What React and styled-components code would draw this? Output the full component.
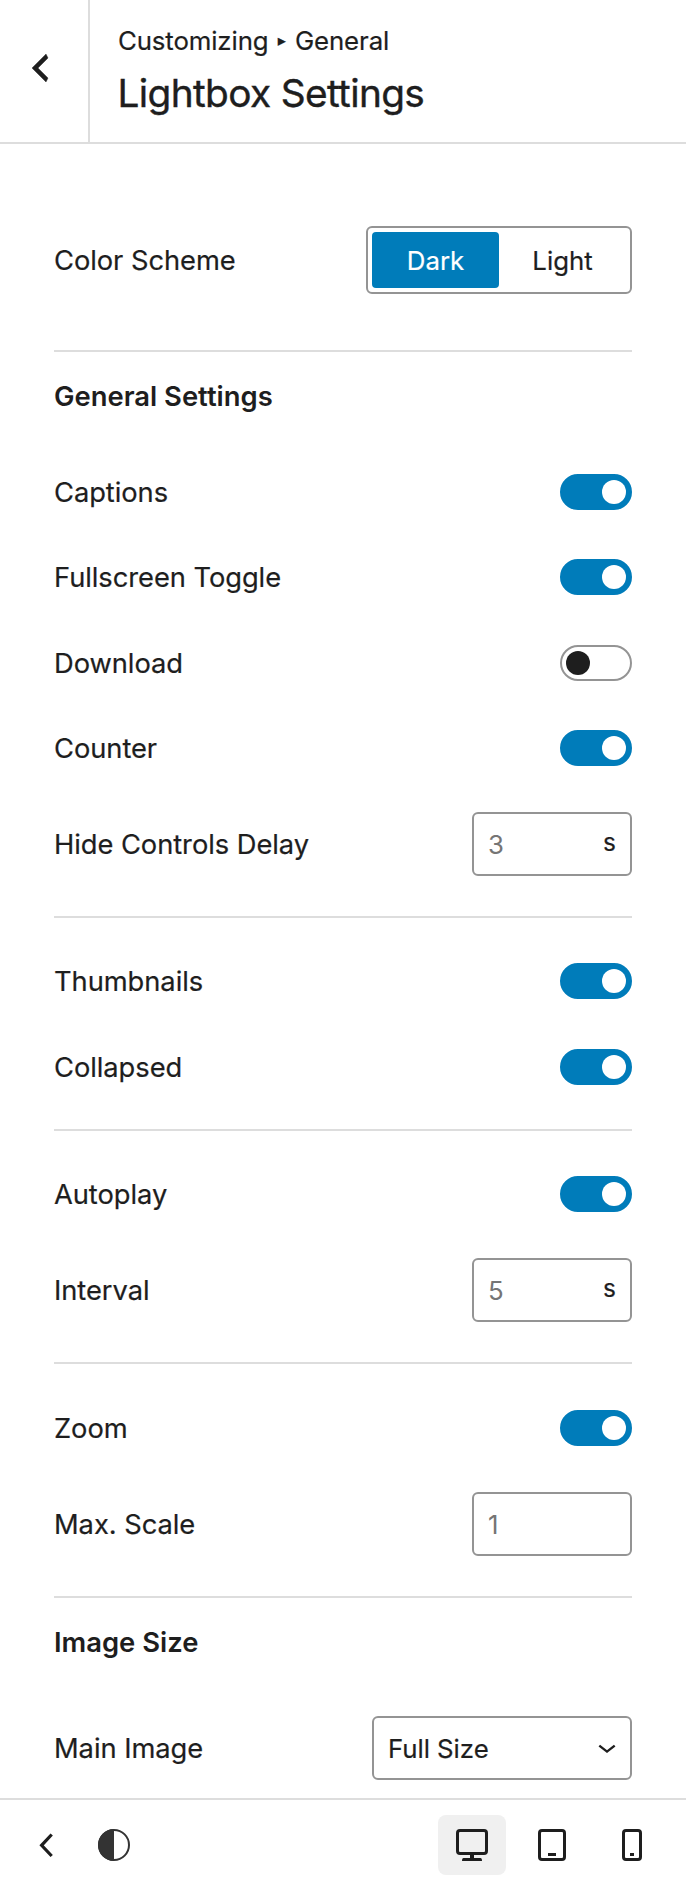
import React, { useState } from 'react';
import styled, { createGlobalStyle, css } from 'styled-components';

const GlobalStyle = createGlobalStyle`
  * { box-sizing: border-box; }
  body { margin: 0; background: #fff; }
  button, input { font-family: inherit; color: inherit; }
`;

const color = {
  text: '#1e1e1e',
  muted: '#757575',
  line: '#dddddd',
  border: '#949494',
  accent: '#007cba',
};

const Panel = styled.div`
  display: flex;
  flex-direction: column;
  width: 686px;
  height: 1880px;
  background: #fff;
  color: ${color.text};
  font-family: Inter, 'Liberation Sans', sans-serif;
  font-size: 25.8px;
  -webkit-text-stroke: 0.2px currentColor;
`;

const Header = styled.header`
  display: flex;
  flex: none;
  height: 144px;
  border-bottom: 2px solid ${color.line};
`;

const BackButton = styled.button`
  display: flex;
  align-items: center;
  width: 90px;
  padding: 0 0 7px 20px;
  border: 0;
  border-right: 2px solid ${color.line};
  background: none;
`;

const HeaderText = styled.div`
  padding: 22px 0 0 28px;
`;

const Breadcrumb = styled.div`
  display: flex;
  align-items: center;
  height: 36px;
  letter-spacing: -0.12px;
`;

const Separator = styled.span`
  width: 26.5px;
  padding-top: 1px;
  text-align: center;
  font: 16px/36px 'DejaVu Sans', sans-serif;
`;

const Title = styled.h1`
  margin: 7px 0 0 -0.5px;
  font-size: 38.8px;
  font-weight: 400;
  line-height: 56px;
  letter-spacing: -0.64px;
  -webkit-text-stroke: 0.4px ${color.text};
`;

const Body = styled.main`
  flex: 1;
  min-height: 0;
  padding: 0 54px;
  overflow: hidden;
`;

const Section = styled.section`
  padding: ${(p) => p.$top ?? 0}px 0 ${(p) => p.$bottom ?? 0}px;
  border-bottom: 2px solid ${color.line};
`;

const SectionTitle = styled.h2`
  height: 97px;
  margin: 0;
  font-size: 27.4px;
  font-weight: 600;
  line-height: 88px;
  -webkit-text-stroke: 0;
`;

const rowHeights = { toggle: 85.5, field: 106, segment: 68 };

const Label = styled.span`
  padding-top: 2px;
  font-size: 27.3px;
  line-height: 36px;
  letter-spacing: -0.05px;
`;

const Row = styled.div`
  display: flex;
  align-items: center;
  justify-content: space-between;
  height: ${(p) => rowHeights[p.$kind]}px;
  ${(p) => p.$kind === 'segment' && css`
    ${Label} { padding-top: 1px; }
  `}
`;

const Segmented = styled.div`
  display: flex;
  padding: 4px;
  border: 2px solid ${color.border};
  border-radius: 6px;
`;

const Segment = styled.button`
  width: 127px;
  height: 56px;
  padding: 1px 0 0;
  border: 0;
  border-radius: 4px;
  font-size: 25.8px;
  background: ${(p) => (p.$active ? color.accent : 'transparent')};
  color: ${(p) => (p.$active ? '#fff' : color.text)};
  -webkit-text-stroke: 0.2px currentColor;
`;

const Switch = styled.button`
  display: flex;
  align-items: center;
  justify-content: flex-start;
  width: 72px;
  height: 36px;
  padding: 0 4px;
  border: 2px solid ${color.border};
  border-radius: 18px;
  background: #fff;
  ${(p) =>
    p.$on &&
    css`
      justify-content: flex-end;
      border-color: ${color.accent};
      background: ${color.accent};
    `}
`;

const Knob = styled.span`
  width: 24px;
  height: 24px;
  border-radius: 50%;
  background: ${(p) => (p.$on ? '#fff' : color.text)};
`;

const Field = styled.div`
  display: flex;
  align-items: center;
  justify-content: space-between;
  width: ${(p) => p.$width}px;
  height: 64px;
  padding: 0 14px;
  border: 2px solid ${color.border};
  border-radius: 6px;
`;

const NumberInput = styled.input`
  flex: 1;
  min-width: 0;
  height: 36px;
  padding: 1px 0 0;
  border: 0;
  outline: 0;
  background: none;
  font-size: 25.8px;
  -webkit-text-stroke: 0;
  &::placeholder { color: ${color.muted}; opacity: 1; }
`;

const Unit = styled.span`
  padding-bottom: 4px;
  font-size: 24.5px;
  line-height: 30px;
`;

const SelectValue = styled.span`
  padding-top: 1px;
  letter-spacing: -0.05px;
`;

const Footer = styled.footer`
  display: flex;
  flex: none;
  align-items: center;
  justify-content: space-between;
  height: 82px;
  padding: 15px 20px 5px 36px;
  border-top: 2px solid ${color.line};
`;

const Tools = styled.div`
  display: flex;
  align-items: center;
  gap: ${(p) => p.$gap}px;
`;

const ToolButton = styled.button`
  display: flex;
  padding: 0;
  border: 0;
  background: none;
`;

const DeviceButton = styled(ToolButton)`
  align-items: center;
  justify-content: center;
  width: 68px;
  height: 60px;
  border-radius: 8px;
  background: ${(p) => (p.$active ? '#f0f0f0' : 'transparent')};
`;

const ArrowLeft = () => (
  <svg width="40" height="40" viewBox="0 0 20 20" fill={color.text} stroke={color.text} strokeWidth="0.2">
    <path d="M14 5l-5 5 5 5-1 2-7-7 7-7z" />
  </svg>
);

const ChevronLeft = () => (
  <svg width="20" height="32" viewBox="0 0 20 32" fill="none" stroke={color.text} strokeWidth="3.2">
    <path d="M15.7 5.5 5.6 16.3 15.7 27" />
  </svg>
);

const ChevronDown = () => (
  <svg width="18" height="12" viewBox="0 0 18 12" fill="none" stroke={color.text} strokeWidth="2.4">
    <path d="M1.3 3.6 9 9.6 16.7 3.6" />
  </svg>
);

const Contrast = () => (
  <svg width="32" height="32" viewBox="0 0 32 32">
    <circle cx="16" cy="16" r="15" fill="#fff" stroke="#333" strokeWidth="2" />
    <path d="M16 0a16 16 0 0 0 0 32z" fill="#333" />
  </svg>
);

const Desktop = () => (
  <svg width="32" height="32" viewBox="0 0 32 32">
    <rect x="1.5" y="1.5" width="29" height="23" rx="2.5" fill="none" stroke={color.text} strokeWidth="3" />
    <path d="M14 25h4v4h6.5q1.5 0 1.5 3H6q0-3 1.5-3H14z" fill={color.text} />
  </svg>
);

const Tablet = () => (
  <svg width="28" height="32" viewBox="0 0 28 32">
    <rect x="1.5" y="1.5" width="25" height="29" rx="2.5" fill="none" stroke={color.text} strokeWidth="3" />
    <path d="M10 24h8v3h-8z" fill={color.text} />
  </svg>
);

const Phone = () => (
  <svg width="20" height="32" viewBox="0 0 20 32">
    <rect x="1.5" y="1.5" width="17" height="29" rx="2.5" fill="none" stroke={color.text} strokeWidth="3" />
    <path d="M8 24h4v3H8z" fill={color.text} />
  </svg>
);

function ToggleRow({ label, initial = true }) {
  const [on, setOn] = useState(initial);
  return (
    <Row $kind="toggle">
      <Label>{label}</Label>
      <Switch role="switch" aria-checked={on} aria-label={label} $on={on} onClick={() => setOn(!on)}>
        <Knob $on={on} />
      </Switch>
    </Row>
  );
}

function NumberRow({ label, placeholder, unit }) {
  return (
    <Row $kind="field">
      <Label>{label}</Label>
      <Field $width={160}>
        <NumberInput placeholder={placeholder} aria-label={label} />
        {unit && <Unit>{unit}</Unit>}
      </Field>
    </Row>
  );
}

const devices = [
  ['Desktop', Desktop],
  ['Tablet', Tablet],
  ['Phone', Phone],
];

export default function App() {
  const [scheme, setScheme] = useState('Dark');
  const [device, setDevice] = useState('Desktop');
  return (
    <Panel>
      <GlobalStyle />
      <Header>
        <BackButton aria-label="Back"><ArrowLeft /></BackButton>
        <HeaderText>
          <Breadcrumb>
            <span>Customizing</span>
            <Separator>▸</Separator>
            <span>General</span>
          </Breadcrumb>
          <Title>Lightbox Settings</Title>
        </HeaderText>
      </Header>
      <Body>
        <Section $top={82} $bottom={56}>
          <Row $kind="segment">
            <Label>Color Scheme</Label>
            <Segmented>
              {['Dark', 'Light'].map((name) => (
                <Segment key={name} $active={scheme === name} onClick={() => setScheme(name)}>
                  {name}
                </Segment>
              ))}
            </Segmented>
          </Row>
        </Section>
        <Section $bottom={19}>
          <SectionTitle>General Settings</SectionTitle>
          <ToggleRow label="Captions" />
          <ToggleRow label="Fullscreen Toggle" />
          <ToggleRow label="Download" initial={false} />
          <ToggleRow label="Counter" />
          <NumberRow label="Hide Controls Delay" placeholder="3" unit="s" />
        </Section>
        <Section $top={20.4} $bottom={19.6}>
          <ToggleRow label="Thumbnails" />
          <ToggleRow label="Collapsed" />
        </Section>
        <Section $top={20.4} $bottom={19.1}>
          <ToggleRow label="Autoplay" />
          <NumberRow label="Interval" placeholder="5" unit="s" />
        </Section>
        <Section $top={21.2} $bottom={19.3}>
          <ToggleRow label="Zoom" />
          <NumberRow label="Max. Scale" placeholder="1" />
        </Section>
        <Section>
          <SectionTitle>Image Size</SectionTitle>
          <Row $kind="field">
            <Label>Main Image</Label>
            <Field $width={260} role="combobox" aria-label="Main Image">
              <SelectValue>Full Size</SelectValue>
              <ChevronDown />
            </Field>
          </Row>
        </Section>
      </Body>
      <Footer>
        <Tools $gap={42}>
          <ToolButton aria-label="Collapse"><ChevronLeft /></ToolButton>
          <ToolButton aria-label="Contrast"><Contrast /></ToolButton>
        </Tools>
        <Tools $gap={12}>
          {devices.map(([name, Icon]) => (
            <DeviceButton key={name} aria-label={name} $active={device === name} onClick={() => setDevice(name)}>
              <Icon />
            </DeviceButton>
          ))}
        </Tools>
      </Footer>
    </Panel>
  );
}
